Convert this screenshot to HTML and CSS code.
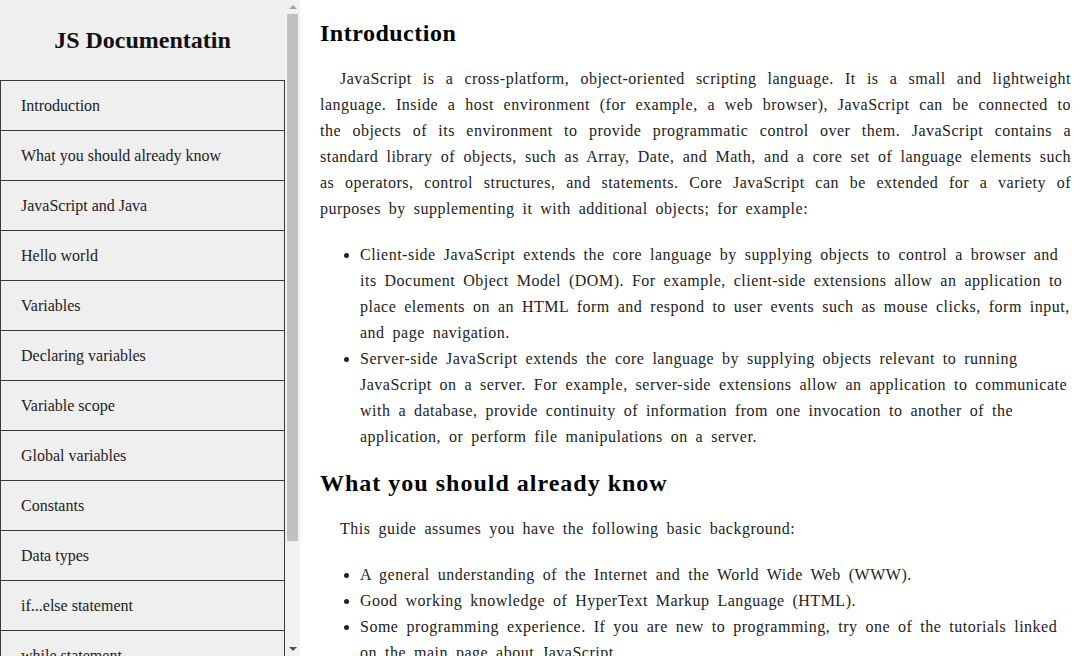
FILE: index.html
```html
<!DOCTYPE html>
<html lang="en">
<head>
<meta charset="utf-8">
<title>JS Documentation</title>
<link rel="stylesheet" href="styles.css">
</head>
<body>
<aside class="sidebar">
  <nav class="navbar" id="navbar">
    <header class="nav-title">JS Documentatin</header>
    <ul class="nav-list">
      <li><a class="nav-link" href="#Introduction">Introduction</a></li>
      <li><a class="nav-link" href="#What_you_should_already_know">What you should already know</a></li>
      <li><a class="nav-link" href="#JavaScript_and_Java">JavaScript and Java</a></li>
      <li><a class="nav-link" href="#Hello_world">Hello world</a></li>
      <li><a class="nav-link" href="#Variables">Variables</a></li>
      <li><a class="nav-link" href="#Declaring_variables">Declaring variables</a></li>
      <li><a class="nav-link" href="#Variable_scope">Variable scope</a></li>
      <li><a class="nav-link" href="#Global_variables">Global variables</a></li>
      <li><a class="nav-link" href="#Constants">Constants</a></li>
      <li><a class="nav-link" href="#Data_types">Data types</a></li>
      <li><a class="nav-link" href="#if...else_statement">if...else statement</a></li>
      <li><a class="nav-link" href="#while_statement">while statement</a></li>
      <li><a class="nav-link" href="#Function_declarations">Function declarations</a></li>
      <li><a class="nav-link" href="#Reference">Reference</a></li>
    </ul>
  </nav>
  <div class="scrollbar" aria-hidden="true">
    <div class="sb-btn"><span class="sb-arrow-up"></span></div>
    <div class="sb-track"><div class="sb-thumb"></div></div>
    <div class="sb-btn"><span class="sb-arrow-down"></span></div>
  </div>
</aside>
<main class="main-doc" id="main-doc">
  <section class="main-section" id="Introduction">
    <h1 class="sec-title sec-title-first">Introduction</h1>
    <p class="para">JavaScript is a cross-platform, object-oriented scripting language. It is a small and lightweight language. Inside a host environment (for example, a web browser), JavaScript can be connected to the objects of its environment to provide programmatic control over them. JavaScript contains a standard library of objects, such as Array, Date, and Math, and a core set of language elements such as operators, control structures, and statements. Core JavaScript can be extended for a variety of purposes by supplementing it with additional objects; for example:</p>
    <ul class="bullets">
      <li>Client-side JavaScript extends the core language by supplying objects to control a browser and its Document Object Model (DOM). For example, client-side extensions allow an application to place elements on an HTML form and respond to user events such as mouse clicks, form input, and page navigation.</li>
      <li>Server-side JavaScript extends the core language by supplying objects relevant to running JavaScript on a server. For example, server-side extensions allow an application to communicate with a database, provide continuity of information from one invocation to another of the application, or perform file manipulations on a server.</li>
    </ul>
  </section>
  <section class="main-section" id="What_you_should_already_know">
    <h2 class="sec-title">What you should already know</h2>
    <p class="para">This guide assumes you have the following basic background:</p>
    <ul class="bullets">
      <li>A general understanding of the Internet and the World Wide Web (WWW).</li>
      <li>Good working knowledge of HyperText Markup Language (HTML).</li>
      <li>Some programming experience. If you are new to programming, try one of the tutorials linked on the main page about JavaScript.</li>
    </ul>
  </section>
  <section class="main-section" id="JavaScript_and_Java">
    <h2 class="sec-title">JavaScript and Java</h2>
    <p class="para">JavaScript and Java are similar in some ways but fundamentally different in some others. The JavaScript language resembles Java but does not have Java's static typing and strong type checking.</p>
  </section>
</main>
</body>
</html>
```
FILE: styles.css
```css
html, body {
  margin: 0;
  padding: 0;
  height: 100%;
}

body {
  display: flex;
  overflow: hidden;
  background: #ffffff;
  font-family: "Liberation Serif", "Times New Roman", serif;
  color: #222222;
}

/* ---------- sidebar ---------- */
.sidebar {
  flex: 0 0 300px;
  display: flex;
  height: 100vh;
  background: #efefef;
}

.navbar {
  flex: 0 0 285px;
  width: 285px;
  height: 100%;
  overflow: hidden;
}

.nav-title {
  height: 80px;
  display: flex;
  align-items: center;
  justify-content: center;
  font-size: 24px;
  font-weight: bold;
  color: #111111;
}

.nav-list {
  list-style: none;
  margin: 0;
  padding: 0;
}

.nav-list li {
  border: 1px solid #3a3a3a;
  border-bottom: none;
}

.nav-list li:last-child {
  border-bottom: 1px solid #3a3a3a;
}

.nav-link {
  display: flex;
  align-items: center;
  height: 49px;
  padding-left: 20px;
  font-size: 16px;
  color: #222222;
  text-decoration: none;
}

/* ---------- fake scrollbar ---------- */
.scrollbar {
  flex: 0 0 15px;
  display: flex;
  flex-direction: column;
  background: #f1f1f1;
}

.sb-btn {
  flex: 0 0 14px;
  display: flex;
  align-items: center;
  justify-content: center;
}

.sb-arrow-up,
.sb-arrow-down {
  width: 0;
  height: 0;
  border-left: 4px solid transparent;
  border-right: 4px solid transparent;
}

.sb-arrow-up {
  border-bottom: 4px solid #a3a3a3;
}

.sb-arrow-down {
  border-top: 4px solid #505050;
}

.sb-track {
  flex: 1 1 auto;
  display: flex;
  justify-content: center;
}

.sb-thumb {
  width: 11px;
  height: 527px;
  background: #c1c1c1;
}

/* ---------- main ---------- */
.main-doc {
  flex: 1 1 auto;
  height: 100vh;
  overflow: hidden;
  padding: 0 20px;
  box-sizing: border-box;
  letter-spacing: 0.5px;
  word-spacing: 3.45px;
}

.sec-title {
  margin: 20px 0 19px;
  font-size: 24px;
  font-weight: bold;
  color: #000000;
  letter-spacing: 1px;
  word-spacing: 0;
}

.sec-title-first {
  margin: 20px 0 19px;
  letter-spacing: 0.5px;
}

.para {
  margin: 0 0 20px;
  font-size: 16px;
  line-height: 26px;
  text-indent: 20px;
  text-align: justify;
}

.bullets {
  margin: 20px 0;
  padding-left: 40px;
  font-size: 16px;
  line-height: 26px;
}
```
